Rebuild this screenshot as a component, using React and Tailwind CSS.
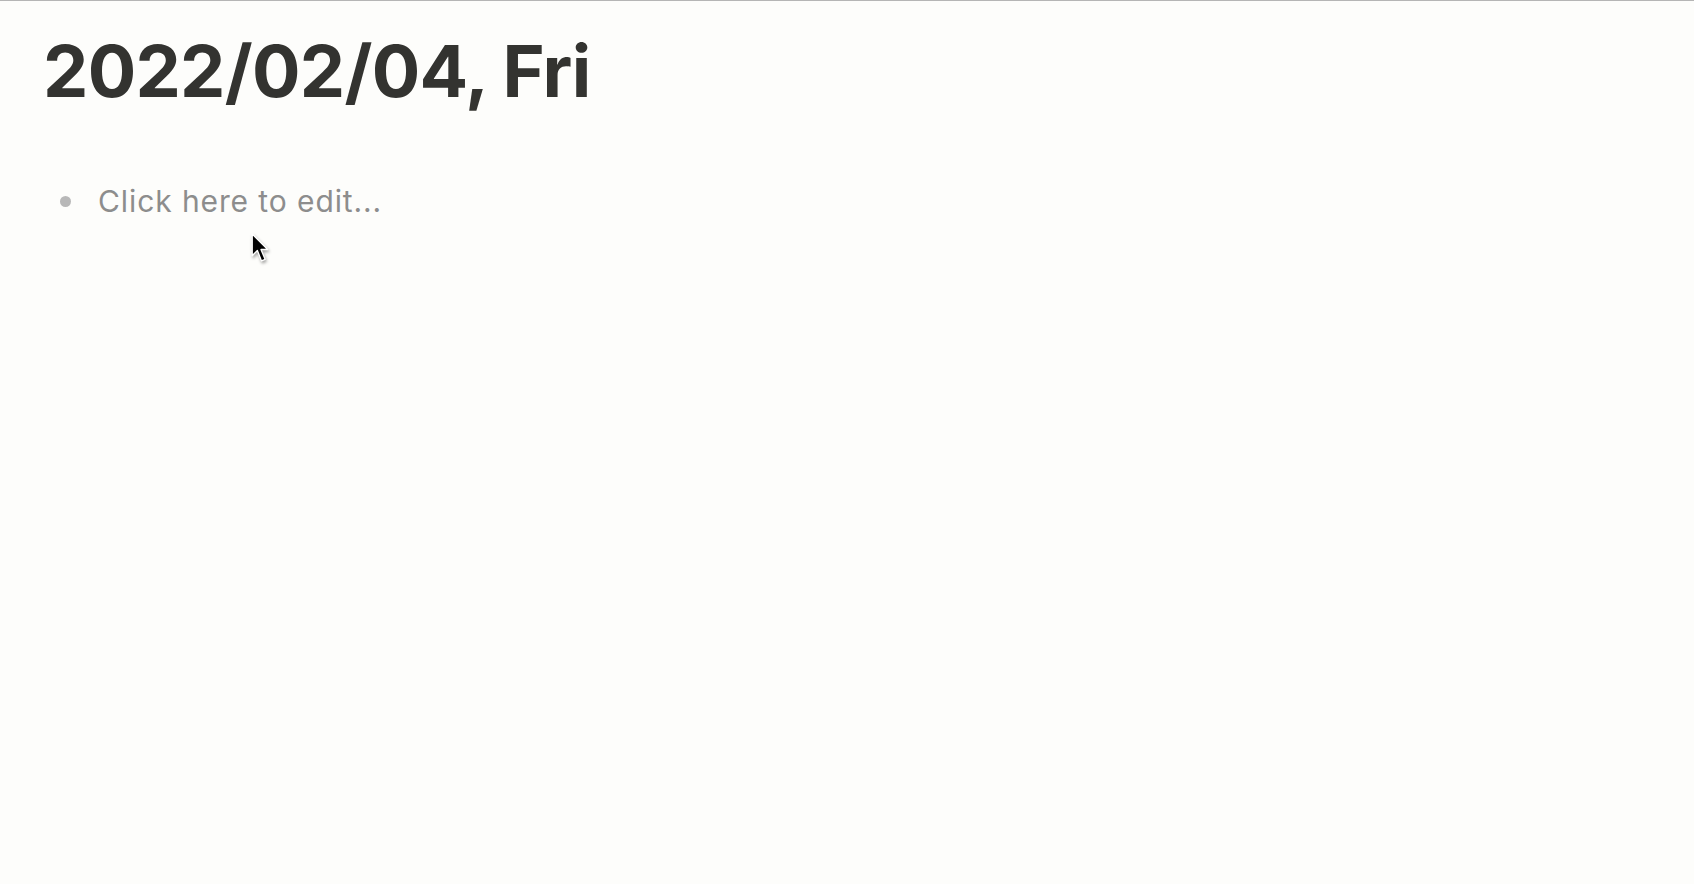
export default function App() {
  return (
    <div className="relative min-h-[884px] w-full bg-[#fdfdfb] border-t border-[#b5b5b5]" style={{ fontFamily: "Inter, 'Noto Sans', sans-serif" }}>
      <div className="pl-[43px] pt-[26px]">
        <h1 className="text-[72px] font-bold leading-[88px] text-[#333330] tracking-[-0.01em]">2022/02/04, Fri</h1>
        <div className="mt-[68px] flex items-center pl-[17px]">
          <span className="h-[11px] w-[11px] rounded-full bg-[#b8b8b8]" />
          <span className="ml-[27px] text-[30px] leading-[36px] text-[#8d8d8d] tracking-[0.03em]">Click here to edit...</span>
        </div>
      </div>
      <svg className="absolute left-[251px] top-[232px] drop-shadow-[1px_2px_1.5px_rgba(0,0,0,0.35)]" width="21" height="31" viewBox="0 0 20 30">
        <path d="M1 1 L1 22 L6 17 L10 27 L13.5 25.5 L9.5 16 L16 16 Z" fill="#000" stroke="#fff" strokeWidth="1.3" strokeLinejoin="round" />
      </svg>
    </div>
  );
}
